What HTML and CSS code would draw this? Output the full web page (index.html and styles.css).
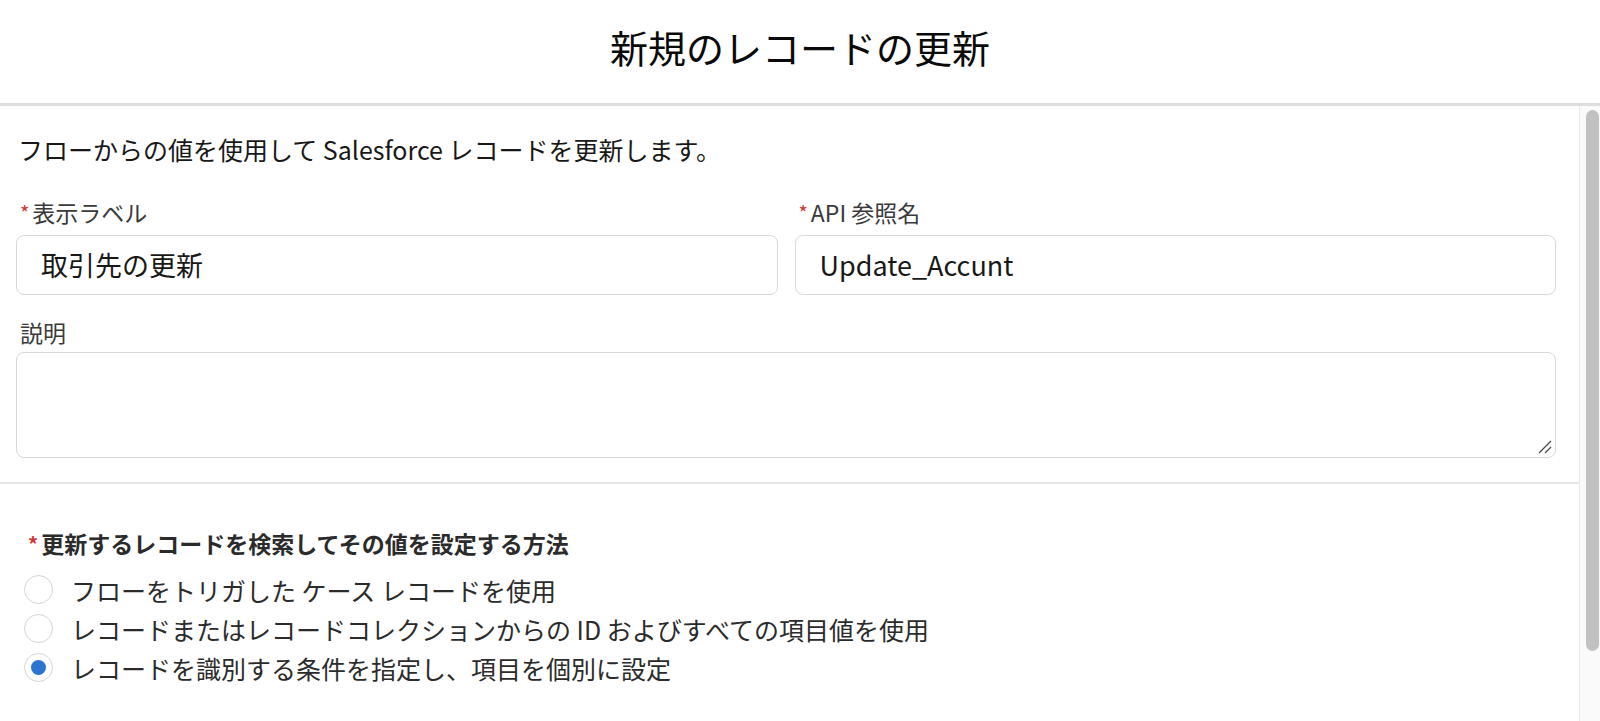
FILE: index.html
```html
<!DOCTYPE html>
<html lang="ja">
<head>
<meta charset="utf-8">
<title>新規のレコードの更新</title>
<link rel="stylesheet" href="styles.css">
</head>
<body>
<div class="modal">
  <header class="modal-header">
    <h1 class="modal-title">新規のレコードの更新</h1>
  </header>
  <div class="modal-main">
    <div class="modal-body">
      <div class="top-section">
        <p class="intro">フローからの値を使用して Salesforce レコードを更新します。</p>
        <div class="field-grid">
          <div class="field">
            <label class="field-label"><abbr class="required">*</abbr>表示ラベル</label>
            <div class="input">取引先の更新</div>
          </div>
          <div class="field">
            <label class="field-label"><abbr class="required">*</abbr>API 参照名</label>
            <div class="input">Update_Accunt</div>
          </div>
        </div>
        <div class="field field-desc">
          <label class="field-label">説明</label>
          <div class="textarea-wrap">
            <textarea class="textarea"></textarea>
            <svg class="grip" width="14" height="14" viewBox="0 0 14 14" aria-hidden="true">
              <line x1="1" y1="13" x2="13" y2="1" stroke="#4a4a4a" stroke-width="1.2"/>
              <line x1="7" y1="13" x2="13" y2="7" stroke="#4a4a4a" stroke-width="1.2"/>
            </svg>
          </div>
        </div>
      </div>
      <div class="bottom-section">
        <fieldset class="radio-group">
          <legend class="group-label"><abbr class="required">*</abbr>更新するレコードを検索してその値を設定する方法</legend>
          <div class="radio-row"><span class="radio"></span><span class="radio-text">フローをトリガした ケース レコードを使用</span></div>
          <div class="radio-row"><span class="radio"></span><span class="radio-text">レコードまたはレコードコレクションからの ID およびすべての項目値を使用</span></div>
          <div class="radio-row"><span class="radio checked"></span><span class="radio-text">レコードを識別する条件を指定し、項目を個別に設定</span></div>
        </fieldset>
      </div>
    </div>
    <div class="scrollbar"><div class="thumb"></div></div>
  </div>
</div>
</body>
</html>
```
FILE: styles.css
```css
* { box-sizing: border-box; }
html, body {
  margin: 0;
  padding: 0;
  background: #ffffff;
}
body {
  font-family: "Noto Sans CJK JP", "Noto Sans", sans-serif;
  color: #181818;
  width: 1600px;
  height: 721px;
  overflow: hidden;
}
.modal {
  display: flex;
  flex-direction: column;
  height: 721px;
}
.modal-header {
  height: 106px;
  border-bottom: 3px solid #dedede;
  display: flex;
  align-items: center;
  justify-content: center;
  padding-bottom: 10px;
}
.modal-title {
  margin: 0;
  font-size: 38px;
  font-weight: 400;
  line-height: 48px;
  color: #0a0a0a;
}
.modal-main {
  flex: 1;
  display: flex;
  min-height: 0;
}
.modal-body {
  flex: 1;
  overflow: hidden;
}
.top-section {
  padding: 26px 23px 24px 16px;
  border-bottom: 2px solid #e6e6e6;
}
.intro {
  margin: 0 0 30px 2px;
  font-size: 25px;
  line-height: 34px;
  color: #181818;
}
.field-grid {
  display: grid;
  grid-template-columns: 1fr 1fr;
  column-gap: 17px;
}
.field {
  display: flex;
  flex-direction: column;
}
.field-label {
  font-size: 23px;
  line-height: 32px;
  color: #3a3a3a;
  padding-left: 4px;
  margin-bottom: 5px;
}
.required {
  color: #d0342c;
  text-decoration: none;
  border: 0;
  font-size: 20px;
  margin-right: 3px;
  position: relative;
  top: -1px;
}
.input {
  height: 60px;
  border: 1.5px solid #d8d8d8;
  border-radius: 8px;
  padding: 0 24px;
  font-size: 27px;
  line-height: 57px;
  color: #181818;
}
.field-desc {
  margin-top: 21px;
}
.field-desc .field-label {
  margin-bottom: 4px;
}
.textarea-wrap {
  position: relative;
}
.textarea {
  height: 106px;
  border: 1.5px solid #d8d8d8;
  border-radius: 8px;
  resize: none;
  font-family: inherit;
  font-size: 25px;
  padding: 10px 24px;
  outline: none;
  display: block;
  width: 100%;
}
.grip {
  position: absolute;
  right: 4px;
  bottom: 4px;
}
.bottom-section {
  padding: 43px 23px 0 24px;
}
.radio-group {
  border: 0;
  margin: 0;
  padding: 0;
  min-width: 0;
}
.group-label {
  padding: 0 0 0 4px;
  font-size: 23px;
  line-height: 32px;
  font-weight: 700;
  color: #2b2b2b;
  margin-bottom: 9px;
}
.radio-row {
  display: flex;
  align-items: center;
  height: 39px;
}
.radio {
  width: 29px;
  height: 29px;
  border: 1.5px solid #d4d4d4;
  border-radius: 50%;
  background: #ffffff;
  display: flex;
  align-items: center;
  justify-content: center;
  flex-shrink: 0;
  margin-right: 18px;
}
.radio.checked::after {
  content: "";
  width: 15px;
  height: 15px;
  border-radius: 50%;
  background: #2b74cf;
}
.radio-text {
  font-size: 25px;
  line-height: 34px;
  color: #2b2b2b;
}
.scrollbar {
  width: 21px;
  flex-shrink: 0;
  border-left: 1px solid #e8e8e8;
  background: #fafafa;
  padding: 4px 2px 0 6px;
}
.thumb {
  width: 13px;
  height: 541px;
  border-radius: 7px;
  background: #c1c1c1;
}
```
